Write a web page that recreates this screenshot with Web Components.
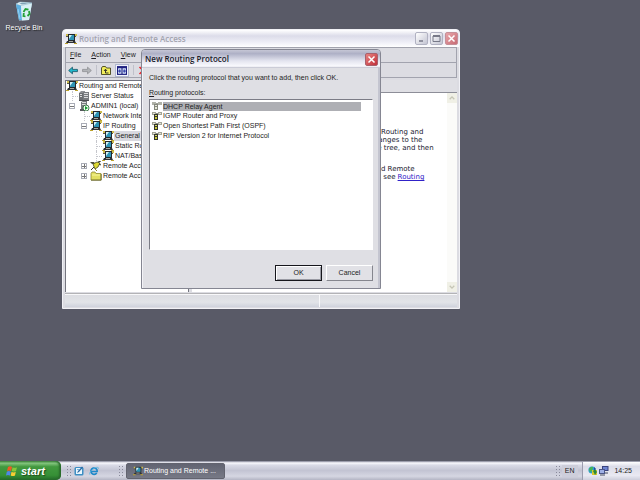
<!DOCTYPE html>
<html lang="en">
<head>
<meta charset="utf-8">
<title>Routing and Remote Access</title>
<style>
html, body { height: 100%; margin: 0; }
body { font: 7px/10px "Liberation Sans", Arial, sans-serif; color: #1c1c22; background: #595a67; overflow: hidden; }
</style>
</head>
<body>
<xp-desktop>
  <desktop-shortcut icon="bin">Recycle Bin</desktop-shortcut>
  <console-window slot="window" heading="Routing and Remote Access"></console-window>
  <protocol-dialog slot="window" heading="New Routing Protocol"></protocol-dialog>
  <task-bar slot="taskbar"></task-bar>
</xp-desktop>

<script>
const icons = {
  net: `<svg viewBox="0 0 12 10"><path d="M1 0h2v2H1zM9 0h3v2H9z" fill="#cdbb4c"/><path d="M1 2h10v1H1z" fill="#55564a"/><rect x="3" y="0" width="7" height="7" fill="#25282c"/><path d="M4 1h5v5H4z" fill="#2e93b4"/><path d="M4 1h3L4 5z" fill="#d3f1f6"/><path d="M2 7h8l1 2H1z" fill="#2f3135"/><path d="M4 7h4v1H4z" fill="#a6a8a2"/><path d="M0 9h3v1H0zM9 9h3v1H9z" fill="#bda32e"/></svg>`,
  server: `<svg viewBox="0 0 12 10"><path d="M1 2l2-2h4v9H1z" fill="#8e9094"/><path d="M1 2h4v7H1z" fill="#6b6e72"/><path d="M2 3h2v1H2zM2 5h2v1H2z" fill="#ddd"/><path d="M5 1h6v8H5z" fill="#777a7e"/><path d="M6 2h4v1H6zM6 4h4v1H6zM6 6h4v1H6z" fill="#d9dadc"/><path d="M1 9h10v1H1z" fill="#4a4c50"/></svg>`,
  host: `<svg viewBox="0 0 12 10"><path d="M3 1l2-1h4v8H3z" fill="#777a7e"/><path d="M4 1h4v1H4zM4 3h4v1H4z" fill="#ddd"/><path d="M2 8h7v2H2z" fill="#55585c"/><circle cx="8" cy="7" r="3" fill="#f4fff4" stroke="#1d5e2a" stroke-width=".8"/><path d="M7 5l3 2-3 2z" fill="#139b2e"/></svg>`,
  plug: `<svg viewBox="0 0 12 10"><path d="M0 1h4l1 2H2z" fill="#4c4f3d"/><path d="M3 3l4-2 3 1-2 4-3 2z" fill="#dcd832" stroke="#44461f" stroke-width=".8"/><path d="M4 6L1 9M8 1l3-1M9 3l2 1" stroke="#34362b"/><path d="M5 8l2 2" stroke="#8b8a30"/></svg>`,
  folder: `<svg viewBox="0 0 12 10"><path d="M1 2.5L2 1h3l1 1.5h5V9H1z" fill="#e2df62" stroke="#8f8b32" stroke-width=".8"/><path d="M2 4h8" stroke="#fffcae" stroke-width=".8"/><path d="M1 9.200h10.200V3" fill="none" stroke="#55521c" stroke-width=".7"/></svg>`,
  proto: `<svg viewBox="0 0 10 8"><path d="M0 1h10v1H0z" fill="#8d8f86"/><path d="M0 0h4v3H0zM6 0h4v3H6z" fill="#a3a597"/><path d="M1 1h2v1H1zM7 1h2v1H7z" fill="#e2e3d8"/><path d="M2 2h4v6H2z" fill="#34362d"/><path d="M3 3h2v1H3z" fill="#d8dc60"/><path d="M3 5h2v2H3z" fill="#c9cc3c"/></svg>`,
  protosel: `<svg viewBox="0 0 10 8"><path d="M0 1h10v1H0z" fill="#9fa199"/><path d="M0 0h4v3H0zM6 0h4v3H6z" fill="#b0b2a8"/><path d="M2 2h4v6H2z" fill="#85877d"/><path d="M3 3h2v1H3zM3 5h2v2H3z" fill="#e6e8d8"/></svg>`,
  back: `<svg viewBox="0 0 9 8"><path d="M0.6 4L4 1v2h4.500v2H4v2z" fill="#20b8cc" stroke="#0d4f60" stroke-width=".7"/></svg>`,
  forward: `<svg viewBox="0 0 9 8"><path d="M8.400 4L5 1v2H.5v2H5v2z" fill="#b2b4b8" stroke="#8b8d92" stroke-width=".7"/></svg>`,
  up: `<svg viewBox="0 0 10 9"><path d="M.5 2L1.500 .5h3L5.500 2h4v6.500h-9z" fill="#f1ed5a" stroke="#44431c" stroke-width=".9"/><path d="M7.500 7H4.500V3.500M3 5l1.500-1.800L6 5" fill="none" stroke="#222" stroke-width=".9"/></svg>`,
  panes: `<svg viewBox="0 0 9 8"><path d="M0 0h9v8H0z" fill="#1d1f80"/><path d="M1 2h3v5H1zM5 2h3v5H5z" fill="#d7e6fa"/><path d="M1 4.500h2.500M5.500 4.500H8M2.500 3v3M6.500 3v3" stroke="#2330a0" stroke-width=".9"/></svg>`,
  remove: `<svg viewBox="0 0 9 9"><path d="M1 1l7 7M8 1L1 8" stroke="#ec2128" stroke-width="1.500"/></svg>`,
  bin: `<svg viewBox="0 0 18 20"><path d="M1 3l4-2 12 1-3 17-10 .5z" fill="#b8e2f3"/><path d="M1 3l5 1 1 15H4z" fill="#5baee0"/><path d="M6 4l11-2-3 17-7 .5z" fill="#d9f0f6"/><path d="M1 3l4-2 12 1-11 2.500z" fill="#f5fbfd" stroke="#8fb6ca" stroke-width=".6"/><path d="M4 2.800l3-1 7 .6-7 1z" fill="#7fa3b6"/><path d="M8.500 11l2-3 3 .7M14 10l.5 3-2 2M10.500 15.500l-2-.5.3-3" fill="none" stroke="#21a137" stroke-width="1.800"/><path d="M3 8l2 10" stroke="#92d0f4"/></svg>`,
  flag: `<svg viewBox="0 0 12 12"><path d="M2 2q2-1.500 4 0L5 6Q3 5 1 6z" fill="#ee5a25"/><path d="M6.600 2.200q2 1.200 4.400 0L10 6q-2 1-4.300 0z" fill="#86c83a"/><path d="M.8 6.700q2-1.200 4 0L4 10.500q-2-1.200-4 0z" fill="#4f87e6"/><path d="M5.500 6.800q2 1.200 4.300 0L9 10.500q-2 1.200-4.300 0z" fill="#f8cd33"/></svg>`,
  desk: `<svg viewBox="0 0 10 10"><rect x=".5" y="1" width="9" height="8.500" rx="1.500" fill="#3e8fc4"/><path d="M2 2h6v6H2z" fill="#e8f5fc"/><path d="M3 7l1-2 4-4.500 1 1L5 6z" fill="#2b6aa4"/><path d="M3 3h2v1H3z" fill="#79b3d8"/></svg>`,
  ie: `<svg viewBox="0 0 11 10"><path d="M8.500 7A3.500 3.500 0 1 1 9 5.500H3" fill="none" stroke="#1e88c9" stroke-width="1.800"/><path d="M1 9C-1 7 6 0 10 1q1 .5 0 2" fill="none" stroke="#5fb6e2" stroke-width=".9"/></svg>`,
  globe: `<svg viewBox="0 0 10 10"><circle cx="4" cy="4" r="3.600" fill="#2d9fc9"/><path d="M1 3q2-3 4-2L4 5 2 6z" fill="#49b552"/><path d="M4 4h5v5H4z" fill="#d8c92c"/><path d="M5 5l2-2 2 3-2 3z" fill="#2a8a3e"/><path d="M6 1l2 2-2 1z" fill="#2543a5"/></svg>`,
  lan: `<svg viewBox="0 0 10 10"><path d="M3 0h6.500v5H3z" fill="#39437e"/><path d="M4 1h4.500v3H4z" fill="#6d83d0"/><path d="M0 3h6v5H0z" fill="#4b5688"/><path d="M1 4h4v3H1z" fill="#9fb0e6"/><path d="M1 9h5M6 7h3" stroke="#444a60"/></svg>`,
  chevup: `<svg viewBox="0 0 7 7"><path d="M1.500 4.500l2-2 2 2" fill="none" stroke="#c6c6b6" stroke-width="1.200"/></svg>`,
  chevdown: `<svg viewBox="0 0 7 7"><path d="M1.500 2.500l2 2 2-2" fill="none" stroke="#c6c6b6" stroke-width="1.200"/></svg>`
};

const base = `<style>
:host, *, *::before, *::after { box-sizing: border-box; }
button { font: inherit; color: inherit; margin: 0; padding: 0; border: 0; background: none; }
ul { list-style: none; margin: 0; padding: 0; }
p { margin: 0; }
</style>`;

function define(name, markup) {
  const template = document.createElement('template');
  customElements.define(name, class extends HTMLElement {
    connectedCallback() {
      if (this.shadowRoot) return;
      template.innerHTML = base + (typeof markup === 'function' ? markup(this) : markup);
      this.attachShadow({ mode: 'open' }).append(template.content.cloneNode(true));
    }
  });
}

define('xp-icon', el => `<style>
:host { display: inline-flex; flex: none; width: var(--w, 12px); height: var(--h, 10px); }
svg { width: 100%; height: 100%; display: block; }
</style>${icons[el.getAttribute('name')]}`);

define('xp-desktop', `<style>
:host { display: flex; flex-direction: column; position: relative; height: 100vh; }
main { flex: 1; padding: 1px 3px; }
</style>
<main><slot></slot></main><slot name="window"></slot><slot name="taskbar"></slot>`);

define('desktop-shortcut', el => `<style>
:host { display: inline-block; }
button { display: flex; flex-direction: column; align-items: center; gap: 2px; width: 42px; color: #fff; text-shadow: 1px 1px 1px #222; white-space: nowrap; }
xp-icon { --w: 18px; --h: 20px; }
</style><button><xp-icon name="${el.getAttribute('icon')}"></xp-icon><span><slot></slot></span></button>`);

define('caption-button', el => `<style>
:host { display: block; width: 13px; height: 13px; }
button { display: block; width: 100%; height: 100%; border: 1px solid #b1b2c2; border-radius: 2px; background: linear-gradient(135deg, #fff, #c3c4d2); }
:host([kind="close"]) button { background: linear-gradient(135deg, #e7a5a9, #c86b75); border-color: #c68f98; }
:host([kind="close"][active]) button { background: linear-gradient(135deg, #e88280, #c02f3a); border-color: #a9606c; }
svg { display: block; width: 11px; height: 11px; }
</style><button aria-label="${el.getAttribute('kind')}"><svg viewBox="0 0 11 11" fill="none">${{
  minimize: '<path d="M3 8h4" stroke="#777988" stroke-width="1.500"/>',
  maximize: '<path d="M2 2.500h7M2 3v5.500h7V3z" stroke="#777988"/><path d="M2 3h7" stroke="#777988" stroke-width="2"/>',
  close: '<path d="M2.500 2.500l6 6M8.500 2.500l-6 6" stroke="#fff" stroke-width="1.500"/>'
}[el.getAttribute('kind')]}</svg></button>`);

define('tree-item', el => `<style>
:host { display: flex; align-items: center; height: 10px; padding-left: calc(var(--level) * 12px); white-space: nowrap; }
:host([level="0"]) { --level: 0; } :host([level="1"]) { --level: 1; } :host([level="2"]) { --level: 2; } :host([level="3"]) { --level: 3; }
i { flex: none; width: 6px; height: 6px; margin: 0 3px 0 -9px; border: 1px solid #a9acb6; background: linear-gradient(#777, #777) center / 4px 1px no-repeat #fff; }
i.plus { background: linear-gradient(#777, #777) center / 4px 1px no-repeat, linear-gradient(#777, #777) center / 1px 4px no-repeat #fff; }
i.leaf { width: 6px; height: 10px; margin-left: -6px; margin-right: 0; border: 0; border-left: 1px dotted #c5c6cc; background: linear-gradient(90deg, #c5c6cc 50%, transparent 50%) 0 5px / 2px 1px repeat-x; }
span { padding: 0 1px; }
:host([selected]) span { background: #d9d9df; }
</style>${el.getAttribute('level') === '0' ? '' : `<i class="${el.getAttribute('state') || 'leaf'}"></i>`}<xp-icon name="${el.getAttribute('icon')}"></xp-icon><span><slot></slot></span>`);

define('console-window', el => `<style>
:host { position: absolute; left: 62px; top: 29px; width: 398px; height: 280px; display: flex; flex-direction: column; padding: 0 2px 1px; border: 1px solid #f1f1f6; border-radius: 4px 4px 0 0; background: #dcdce2; }
header { display: flex; align-items: center; gap: 2px; height: 17px; flex: none; margin: 0 -2px; padding: 0 1px 0 2px; border-radius: 3px 3px 0 0; background: linear-gradient(#fff, #dcdce9 35%, #f0f0f8 75%, #fff); }
h1 { flex: 1; margin: 0; font: 600 8px/10px "Open Sans", Tahoma, sans-serif; color: #a3a4af; white-space: nowrap; }
header div { display: flex; gap: 2px; }
.bars { flex: none; border: 1px solid #a2a3ae; }
nav, .tools { display: flex; align-items: center; }
nav { height: 15px; gap: 10px; padding-left: 4px; border-bottom: 1px solid #a2a3ae; }
.tools { height: 14px; gap: 4px; padding-left: 2px; --w: 10px; --h: 9px; }
.tools hr { width: 1px; height: 10px; margin: 0; border: 0; background: #c0c1ca; }
.tools button { display: flex; }
.tools .on { padding: 1px; border: 1px solid #b0b7cf; background: #f1f3fb; }
.panes { flex: 1; min-height: 0; display: grid; grid-template-columns: 124px 1fr; gap: 3px; margin-top: 2px; }
.tree { min-width: 0; overflow: hidden; background: #fff; border: solid #74757f; border-width: 1px 1px 0 1px; }
.detail { display: flex; flex-direction: column; min-width: 0; }
.detail header { height: 12px; margin: 0; border-radius: 0; background: #dfdfe4; }
.body { flex: 1; display: flex; background: #fff; border-top: 1px solid #8d8e98; }
article { flex: 1; padding: 35px 0 0 178px; font: 7px/8px "DejaVu Sans", Verdana, sans-serif; white-space: nowrap; color: #222230; }
article p + p { margin-top: 13px; }
article p > span { display: flex; gap: 2px; }
a { color: #3022c8; }
.scroll { width: 10px; display: flex; flex-direction: column; justify-content: space-between; background: #fbfbf9; --w: 8px; --h: 8px; }
.scroll button { display: flex; align-items: center; justify-content: center; height: 10px; background: #f0f0e6; }
footer { flex: none; display: grid; grid-template-columns: 254px 1fr; gap: 1px; height: 14px; margin-top: 1px; border-top: 1px solid #b3b3b6; background: #f8f8fa; }
footer span { margin-top: 1px; background: linear-gradient(#dcdde2, #e2e4e8 60%, #cfd2dc); }
</style>
<header><xp-icon name="net"></xp-icon><h1>${el.getAttribute('heading')}</h1><div><caption-button kind="minimize"></caption-button><caption-button kind="maximize"></caption-button><caption-button kind="close"></caption-button></div></header>
<div class="bars">
<nav><button><u>F</u>ile</button><button><u>A</u>ction</button><button><u>V</u>iew</button></nav>
<div class="tools"><button aria-label="Back"><xp-icon name="back"></xp-icon></button><button aria-label="Forward"><xp-icon name="forward"></xp-icon></button><hr><button aria-label="Up"><xp-icon name="up"></xp-icon></button><button class="on" aria-label="Show tree"><xp-icon name="panes"></xp-icon></button><hr><button aria-label="Delete"><xp-icon name="remove"></xp-icon></button></div>
</div>
<div class="panes">
<div class="tree">
<tree-item level="0" icon="net">Routing and Remote</tree-item>
<tree-item level="1" icon="server">Server Status</tree-item>
<tree-item level="1" icon="host" state="minus">ADMIN1 (local)</tree-item>
<tree-item level="2" icon="net">Network Inte</tree-item>
<tree-item level="2" icon="net" state="minus">IP Routing</tree-item>
<tree-item level="3" icon="net" selected>General</tree-item>
<tree-item level="3" icon="net">Static Ro</tree-item>
<tree-item level="3" icon="net">NAT/Basi</tree-item>
<tree-item level="2" icon="plug" state="plus">Remote Acce</tree-item>
<tree-item level="2" icon="folder" state="plus">Remote Acce</tree-item>
</div>
<div class="detail"><header></header><div class="body">
<article><p><span>up Routing and</span><span>changes to the</span><span>the tree, and then</span></p><p><span>&nbsp;and Remote</span><span>ng, see <a href="#routing">Routing</a></span></p></article>
<div class="scroll"><button aria-label="Scroll up"><xp-icon name="chevup"></xp-icon></button><button aria-label="Scroll down"><xp-icon name="chevdown"></xp-icon></button></div>
</div></div>
</div>
<footer><span></span><span></span></footer>`);

define('protocol-dialog', el => `<style>
:host { position: absolute; left: 141px; top: 49px; width: 240px; height: 240px; display: flex; flex-direction: column; border: 1px solid #858692; border-radius: 4px 4px 0 0; background: #dfdfe4; box-shadow: inset 1px 0 #f3f3f7, inset -2px 0 #c4c5d0; }
header { display: flex; align-items: center; height: 18px; flex: none; padding: 0 2px 0 3px; border-radius: 3px 3px 0 0; background: linear-gradient(#c6c7d6, #aeb0c6 20%, #e3e4ef 60%, #fafafe 90%, #b9bac8); }
h2 { flex: 1; margin: 0; font: 600 8px/10px "Open Sans", Tahoma, sans-serif; color: #20212b; }
section { flex: 1; min-height: 0; display: flex; flex-direction: column; padding: 5px 7px 7px; }
p, li { white-space: nowrap; }
p { margin-bottom: 5px; }
ul { flex: 1; margin-top: 1px; padding: 1px 11px 0 2px; background: #fff; border: 1px solid #fff; border-top-color: #7b7c86; border-left-color: #7b7c86; }
li { display: flex; align-items: center; gap: 1px; height: 10px; --w: 10px; --h: 8px; }
li span { flex: 1; }
[aria-selected="true"] span { background: #aeafb4; line-height: 9px; }
footer { display: flex; justify-content: flex-end; gap: 4px; padding-top: 15px; }
footer button { width: 47px; height: 16px; border: 1px solid; border-color: #fff #85868e #85868e #fff; background: #e1e1e6; }
footer .default { border-color: #16161c; box-shadow: inset 1px 1px #fff, inset -1px -1px #999aa3; }
</style>
<header><h2>${el.getAttribute('heading')}</h2><caption-button kind="close" active></caption-button></header>
<section><p>Click the routing protocol that you want to add, then click OK.</p>
<div id="label"><u>R</u>outing protocols:</div>
<ul role="listbox" tabindex="0" aria-labelledby="label">
<li role="option" aria-selected="true"><xp-icon name="protosel"></xp-icon><span>DHCP Relay Agent</span></li>
<li role="option"><xp-icon name="proto"></xp-icon><span>IGMP Router and Proxy</span></li>
<li role="option"><xp-icon name="proto"></xp-icon><span>Open Shortest Path First (OSPF)</span></li>
<li role="option"><xp-icon name="proto"></xp-icon><span>RIP Version 2 for Internet Protocol</span></li>
</ul>
<footer><button class="default">OK</button><button>Cancel</button></footer></section>`);

define('task-bar', `<style>
:host { display: flex; align-items: stretch; height: 19px; background: linear-gradient(#7c7d90, #fafaff 10%, #d9dae6 22%, #c3c4d3 50%, #d5d6e2 80%, #b4b5c4); }
.start { display: flex; align-items: center; gap: 3px; width: 61px; padding-left: 6px; border-radius: 0 5px 5px 0; color: #fff; font: italic bold 11px/14px "Liberation Sans", Arial, sans-serif; text-shadow: 1px 1px 1px #1d4a1d; background: linear-gradient(#468a45, #82c47d 12%, #42993f 30%, #369036 75%, #23692a); box-shadow: inset -2px 0 2px #2a6a2c; --w: 12px; --h: 12px; }
.grip { flex: none; width: 5px; margin: 4px 0; background: radial-gradient(circle, #88899a 0 1px, transparent 1px) 0 0 / 3px 3px; }
.quick { display: flex; align-items: center; gap: 5px; padding: 0 19px 0 3px; --w: 10px; --h: 10px; }
.start + .grip { margin-left: 5px; }
.quick button { display: flex; }
.task { display: flex; align-items: center; gap: 1px; width: 99px; margin: 2px 0 1px 3px; padding-left: 6px; color: #fff; border: 1px solid #62636f; border-radius: 2px; background: linear-gradient(#626472, #777986); white-space: nowrap; --w: 10px; }
.gap { flex: 1; }
.lang { padding: 0 4px 0 3px; margin: 4px 4px 3px 2px; color: #222; background: #cdcedb; line-height: 12px; }
.tray { display: flex; align-items: center; gap: 1px; padding: 0 8px 0 5px; margin-top: 1px; border-left: 1px solid #9c9dae; background: linear-gradient(#fff, #dcdde9 25%, #e9e9f2 75%, #cdcedb); --w: 10px; --h: 10px; }
time { margin-left: 4px; }
</style>
<button class="start"><xp-icon name="flag"></xp-icon>start</button>
<span class="grip"></span>
<div class="quick"><button aria-label="Show desktop"><xp-icon name="desk"></xp-icon></button><button aria-label="Browser"><xp-icon name="ie"></xp-icon></button></div>
<span class="grip"></span>
<button class="task"><xp-icon name="net"></xp-icon>Routing and Remote ...</button>
<span class="gap"></span>
<span class="grip"></span><span class="lang">EN</span>
<div class="tray"><xp-icon name="globe"></xp-icon><xp-icon name="lan"></xp-icon><time>14:25</time></div>`);
</script>
</body>
</html>
